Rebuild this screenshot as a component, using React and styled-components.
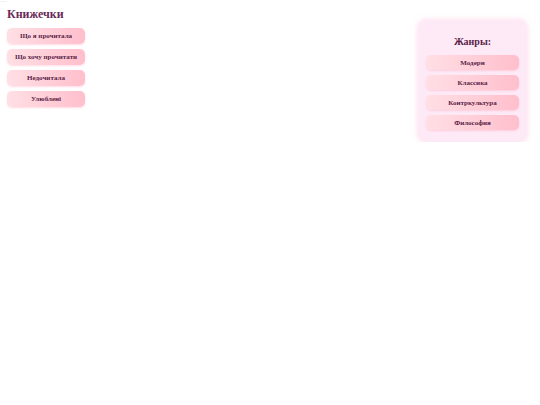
import React from "react";
import styled, { createGlobalStyle } from "styled-components";

const Global = createGlobalStyle`
  html, body { margin: 0; padding: 0; background: #ffffff; }
  body { font-family: "Liberation Serif", "DejaVu Serif", serif; }
`;

const Page = styled.div`
  position: relative;
  display: flex;
  justify-content: space-between;
  align-items: flex-start;
  padding: 0 13px 0 7px;
`;

const Dots = styled.span`
  position: absolute;
  left: 0;
  top: 0;
  font-size: 5px;
  line-height: 4px;
  color: #9a9aa8;
  letter-spacing: 0.5px;
`;

const Side = styled.nav`
  display: flex;
  flex-direction: column;
  gap: 5px;
  padding-top: 7px;
  width: 78px;
`;

const Title = styled.h1`
  margin: 0 0 2px;
  font-size: 12px;
  font-weight: bold;
  color: #6a2a58;
  line-height: 14px;
`;

const PinkButton = styled.button`
  display: flex;
  align-items: center;
  justify-content: center;
  width: 100%;
  height: ${(p) => p.$h}px;
  border: none;
  border-radius: 5px;
  background: linear-gradient(90deg, #ffdfe5 0%, #ffbfcc 100%);
  box-shadow: 0 1px 2px rgba(255, 150, 180, 0.35);
  font-family: "Liberation Serif", "DejaVu Serif", serif;
  font-weight: bold;
  font-size: 7px;
  color: #5a2348;
  padding: 0;
  cursor: pointer;
`;

const Panel = styled.aside`
  margin-top: 20px;
  width: 109px;
  box-sizing: border-box;
  padding: 15px 8px 12px;
  border-radius: 8px;
  background: #feeaf6;
  box-shadow: 0 0 6px rgba(255, 190, 220, 0.6);
  display: flex;
  flex-direction: column;
  gap: 5px;
`;

const PanelTitle = styled.h2`
  margin: 0 0 1px;
  text-align: center;
  font-size: 10px;
  line-height: 14px;
  font-weight: bold;
  color: #5a2348;
`;

const books = ["Що я прочитала", "Що хочу прочитати", "Недочитала", "Улюблені"];
const genres = ["Модерн", "Классика", "Контркультура", "Философия"];

export default function App() {
  return (
    <>
      <Global />
      <Page>
        <Dots>···</Dots>
        <Side>
          <Title>Книжечки</Title>
          {books.map((b) => (
            <PinkButton key={b} $h={16}>{b}</PinkButton>
          ))}
        </Side>
        <Panel>
          <PanelTitle>Жанры:</PanelTitle>
          {genres.map((g) => (
            <PinkButton key={g} $h={15}>{g}</PinkButton>
          ))}
        </Panel>
      </Page>
    </>
  );
}
